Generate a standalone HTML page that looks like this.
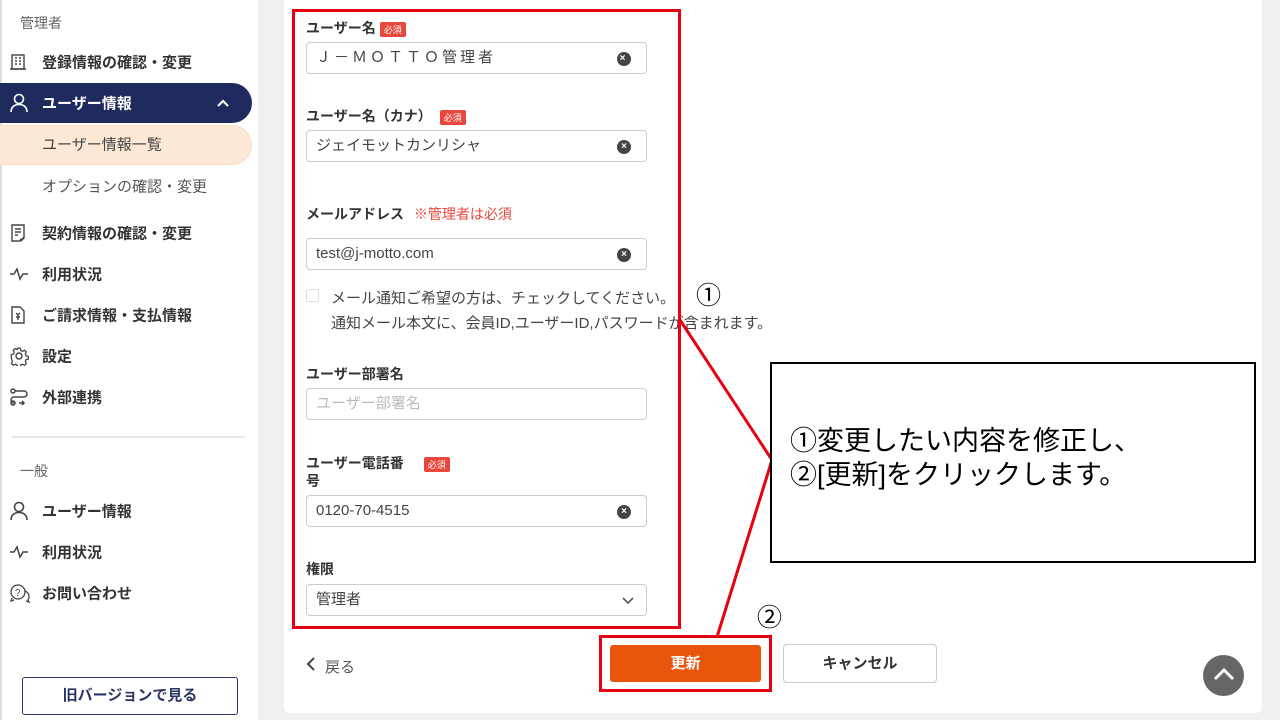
<!DOCTYPE html>
<html><head><meta charset="utf-8"><style>
*{margin:0;padding:0;box-sizing:border-box}
body{width:1280px;height:720px;position:relative;overflow:hidden;background:#f0f0f0;font-family:"Liberation Sans","Noto Sans CJK JP",sans-serif;color:#333}
.a{position:absolute;white-space:nowrap}
#side{position:absolute;left:0;top:0;width:258px;height:720px;background:#fff;box-shadow:inset 2px 0 0 #ddd}
.it{position:absolute;left:42px;font-size:15px;font-weight:bold;color:#333;transform:translateY(-50%)}
.ic{position:absolute;left:9px;transform:translateY(-50%)}
#card{position:absolute;left:284px;top:0;width:978px;height:713px;background:#fff;border-radius:0 0 6px 6px}
.lbl{position:absolute;left:306px;font-size:14px;font-weight:bold;color:#333;transform:translateY(-50%)}
.req{display:inline-block;background:#e8483b;color:#fff;font-size:9px;font-weight:normal;padding:1px 4px;border-radius:2px;vertical-align:middle;margin-left:4px}
.inp{position:absolute;left:306px;width:341px;height:32px;border:1px solid #ccc;border-radius:4px;font-size:15px;color:#444;padding-left:9px;line-height:30px}
.x{position:absolute;right:15px;top:9px;width:14px;height:14px;border-radius:50%;background:#444;color:#fff;font-size:10px;line-height:14px;text-align:center;font-weight:bold}
</style></head><body>
<div id="side">
<div class="a" style="left:20px;top:13px;font-size:14px;color:#666">管理者</div>
<svg class="ic" style="top:62px" width="18" height="18" viewBox="0 0 18 18" fill="none" stroke="#444" stroke-width="1.4"><rect x="3" y="2" width="12" height="14"/><path d="M6 5h2M10 5h2M6 8h2M10 8h2M6 11h2M10 11h2M1 16h16"/></svg>
<div class="it" style="top:62px">登録情報の確認・変更</div>
<div style="position:absolute;left:0;top:83px;width:252px;height:40px;background:#1f2a5e;border-radius:0 20px 20px 0"></div>
<svg class="ic" style="top:103px" width="20" height="20" viewBox="0 0 20 20" fill="none" stroke="#fff" stroke-width="1.6"><circle cx="10" cy="6" r="4.5"/><path d="M2 19c0-5 3.5-7.5 8-7.5s8 2.5 8 7.5"/></svg>
<div class="it" style="top:103px;color:#fff">ユーザー情報</div>
<svg class="a" style="left:216px;top:98px" width="14" height="10" viewBox="0 0 14 10" fill="none" stroke="#fff" stroke-width="2.2"><path d="M2 8l5-5 5 5"/></svg>
<div style="position:absolute;left:0;top:125px;width:252px;height:40px;background:#fde8d6;border:1px solid #f7dcc6;border-left:none;border-radius:0 20px 20px 0"></div>
<div class="it" style="top:144px;font-weight:normal;color:#444">ユーザー情報一覧</div>
<div class="it" style="top:186px;font-weight:normal;color:#555">オプションの確認・変更</div>
<svg class="ic" style="top:233px" width="18" height="20" viewBox="0 0 18 20" fill="none" stroke="#444" stroke-width="1.4"><path d="M3 2h12v12l-4 4H3z M6 6h6M6 9h6M6 12h3M11 16l1.5 1.5 3-3"/></svg>
<div class="it" style="top:233px">契約情報の確認・変更</div>
<svg class="ic" style="top:274px" width="20" height="14" viewBox="0 0 20 14" fill="none" stroke="#444" stroke-width="1.5"><path d="M1 7h4l3-5 3 10 3-5h5"/></svg>
<div class="it" style="top:274px">利用状況</div>
<svg class="ic" style="top:315px" width="18" height="20" viewBox="0 0 18 20" fill="none" stroke="#444" stroke-width="1.4"><path d="M3 2h8l4 4v12H3z M7 8l2 2 2-2M9 10v5M7 12h4"/></svg>
<div class="it" style="top:315px">ご請求情報・支払情報</div>
<svg class="ic" style="top:356px" width="20" height="20" viewBox="0 0 20 20" fill="none" stroke="#444" stroke-width="1.4"><circle cx="10" cy="10" r="3"/><path d="M8.5 1.5h3l.5 2.5 2 1 2.3-1.2 2 2-1.2 2.3.9 2 2.5.5v3l-2.5.5-.9 2 1.2 2.3-2 2-2.3-1.2-2 .9-.5 2.5h-3l-.5-2.5-2-.9-2.3 1.2-2-2 1.2-2.3-.9-2L1.5 11.5v-3L4 8l.9-2L3.7 3.8l2-2L8 3z" transform="scale(.9) translate(1 1)"/></svg>
<div class="it" style="top:356px">設定</div>
<svg class="ic" style="top:397px" width="20" height="18" viewBox="0 0 20 18" fill="none" stroke="#444" stroke-width="1.5"><circle cx="4" cy="3" r="2"/><circle cx="4" cy="15" r="2"/><path d="M6 3h9a3 3 0 010 6H5a3 3 0 000 6"/><path d="M13 13l2 2-2 2M10 15h5"/></svg>
<div class="it" style="top:397px">外部連携</div>
<div style="position:absolute;left:12px;top:436px;width:233px;height:2px;background:#e4e4e4"></div>
<div class="a" style="left:20px;top:461px;font-size:14px;color:#666">一般</div>
<svg class="ic" style="top:511px" width="20" height="20" viewBox="0 0 20 20" fill="none" stroke="#444" stroke-width="1.6"><circle cx="10" cy="6" r="4.5"/><path d="M2 19c0-5 3.5-7.5 8-7.5s8 2.5 8 7.5"/></svg>
<div class="it" style="top:511px">ユーザー情報</div>
<svg class="ic" style="top:552px" width="20" height="14" viewBox="0 0 20 14" fill="none" stroke="#444" stroke-width="1.5"><path d="M1 7h4l3-5 3 10 3-5h5"/></svg>
<div class="it" style="top:552px">利用状況</div>
<svg class="ic" style="top:593px" width="22" height="20" viewBox="0 0 22 20" fill="none" stroke="#444" stroke-width="1.3"><circle cx="9" cy="9" r="7"/><path d="M3 15l-1 3 3-1M16 8a6 6 0 013 9l1 2-3-1"/><text x="6" y="13" font-size="10" fill="#444" stroke="none">?</text></svg>
<div class="it" style="top:593px">お問い合わせ</div>
<div style="position:absolute;left:22px;top:677px;width:216px;height:38px;border:1.5px solid #2a3468;border-radius:3px;text-align:center;line-height:35px;font-size:15px;font-weight:bold;color:#2a3468">旧バージョンで見る</div>
</div>

<div id="card"></div>
<div class="lbl" style="top:28px">ユーザー名<span class="req">必須</span></div>
<div class="inp" style="top:42px;letter-spacing:3px">Ｊ－ＭＯＴＴＯ管理者<div class="x">×</div></div>
<div class="lbl" style="top:116px">ユーザー名（カナ）<span class="req" style="margin-left:8px">必須</span></div>
<div class="inp" style="top:130px">ジェイモットカンリシャ<div class="x">×</div></div>
<div class="lbl" style="top:214px">メールアドレス <span style="color:#e8483b;font-weight:normal;margin-left:6px">※管理者は必須</span></div>
<div class="inp" style="top:238px">test@j-motto.com<div class="x">×</div></div>
<div style="position:absolute;left:306px;top:289px;width:13px;height:13px;border:1px solid #ddd;border-radius:2px"></div>
<div class="a" style="left:331px;top:287px;font-size:15px;color:#444">メール通知ご希望の方は、チェックしてください。</div>
<div class="a" style="left:331px;top:312px;font-size:15px;color:#444">通知メール本文に、会員ID,ユーザーID,パスワードが含まれます。</div>
<div class="lbl" style="top:374px">ユーザー部署名</div>
<div class="inp" style="top:388px;color:#bbb">ユーザー部署名</div>
<div class="lbl" style="top:463px">ユーザー電話番<span class="req" style="margin-left:20px">必須</span></div>
<div class="lbl" style="top:481px">号</div>
<div class="inp" style="top:495px">0120-70-4515<div class="x">×</div></div>
<div class="lbl" style="top:569px">権限</div>
<div class="inp" style="top:584px">管理者
<svg style="position:absolute;right:12px;top:12px" width="12" height="8" viewBox="0 0 12 8" fill="none" stroke="#444" stroke-width="1.5"><path d="M1 1l5 5 5-5"/></svg></div>

<svg class="a" style="left:306px;top:656px" width="10" height="16" viewBox="0 0 10 16" fill="none" stroke="#444" stroke-width="2"><path d="M8 2L2 8l6 6"/></svg>
<div class="a" style="left:325px;top:656px;font-size:15px;color:#555">戻る</div>
<div style="position:absolute;left:610px;top:645px;width:151px;height:37px;background:#e8560c;border-radius:3px;color:#fff;font-size:15px;font-weight:bold;text-align:center;line-height:37px">更新</div>
<div style="position:absolute;left:783px;top:644px;width:154px;height:39px;border:1px solid #ccc;border-radius:4px;color:#333;font-size:15px;font-weight:bold;text-align:center;line-height:37px">キャンセル</div>
<div style="position:absolute;left:1203px;top:655px;width:41px;height:41px;border-radius:50%;background:#666"></div>
<svg class="a" style="left:1212px;top:666px" width="24" height="16" viewBox="0 0 24 16" fill="none" stroke="#fff" stroke-width="3"><path d="M3 13l9-9 9 9"/></svg>

<div style="position:absolute;left:292px;top:9px;width:389px;height:620px;border:3px solid #e60012"></div>
<div style="position:absolute;left:599px;top:635px;width:173px;height:57px;border:3px solid #e60012"></div>
<svg class="a" style="left:0;top:0" width="1280" height="720"><path d="M680 320L772 460L717 637" fill="none" stroke="#e60012" stroke-width="3"/></svg>
<div style="position:absolute;left:770px;top:362px;width:486px;height:201px;border:2px solid #000;background:#fff"></div>
<div class="a" style="left:790px;top:424px;font-size:27px;line-height:34px;color:#000">①変更したい内容を修正し、<br>②[更新]をクリックします。</div>
<div class="a" style="left:696px;top:276px;font-size:25px;color:#000">①</div>
<div class="a" style="left:757px;top:598px;font-size:25px;color:#000">②</div>
</body></html>
